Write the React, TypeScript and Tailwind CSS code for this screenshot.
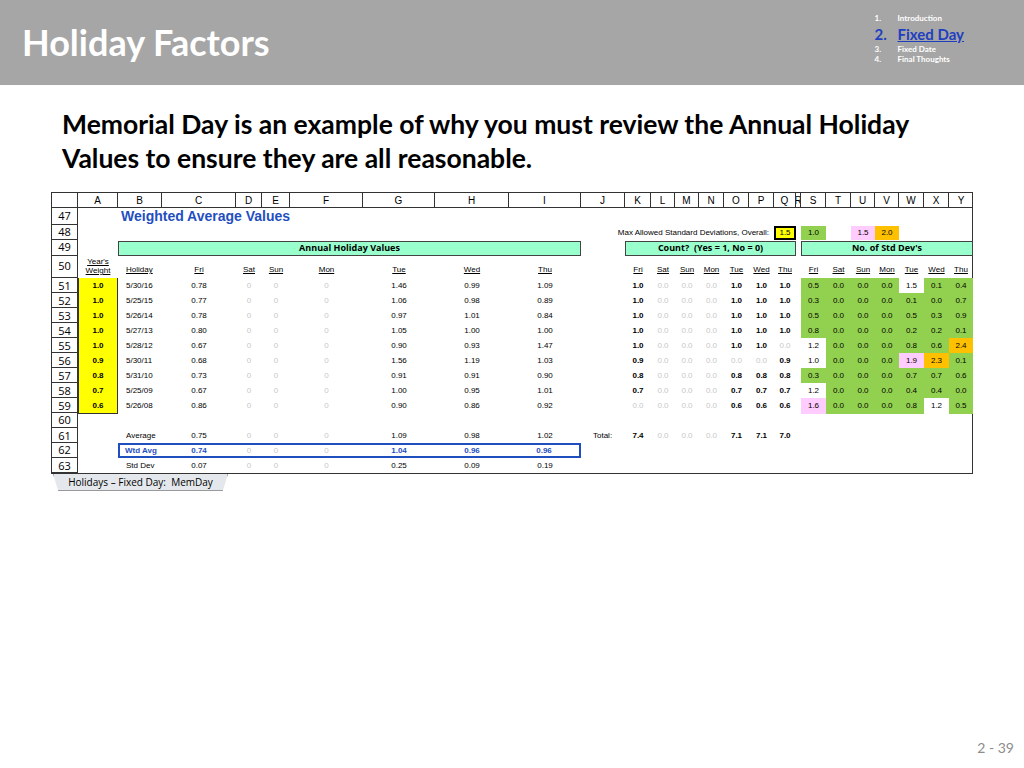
import React from "react";

const COLS = "grid-cols-[26px_40px_44px_74px_26px_28px_73px_72px_74px_72px_44px_26px_24px_24px_25px_25px_25px_22px_5px_25px_25px_24px_24px_25px_25px_24px]";
const LETTERS = ["A","B","C","D","E","F","G","H","I","J","K","L","M","N","O","P","Q","R","S","T","U","V","W","X","Y"];
const DAYS = ["Fri","Sat","Sun","Mon","Tue","Wed","Thu"];

type R = { n: number; w: string; d: string; v: string[]; c: string[]; s: string[] };
const rows: R[] = [
  { n: 51, w: "1.0", d: "5/30/16", v: ["0.78","1.46","0.99","1.09"], c: ["1.0","0.0","0.0","0.0","1.0","1.0","1.0"], s: ["0.5","0.0","0.0","0.0","1.5","0.1","0.4"] },
  { n: 52, w: "1.0", d: "5/25/15", v: ["0.77","1.06","0.98","0.89"], c: ["1.0","0.0","0.0","0.0","1.0","1.0","1.0"], s: ["0.3","0.0","0.0","0.0","0.1","0.0","0.7"] },
  { n: 53, w: "1.0", d: "5/26/14", v: ["0.78","0.97","1.01","0.84"], c: ["1.0","0.0","0.0","0.0","1.0","1.0","1.0"], s: ["0.5","0.0","0.0","0.0","0.5","0.3","0.9"] },
  { n: 54, w: "1.0", d: "5/27/13", v: ["0.80","1.05","1.00","1.00"], c: ["1.0","0.0","0.0","0.0","1.0","1.0","1.0"], s: ["0.8","0.0","0.0","0.0","0.2","0.2","0.1"] },
  { n: 55, w: "1.0", d: "5/28/12", v: ["0.67","0.90","0.93","1.47"], c: ["1.0","0.0","0.0","0.0","1.0","1.0","0.0"], s: ["1.2","0.0","0.0","0.0","0.8","0.6","2.4"] },
  { n: 56, w: "0.9", d: "5/30/11", v: ["0.68","1.56","1.19","1.03"], c: ["0.9","0.0","0.0","0.0","0.0","0.0","0.9"], s: ["1.0","0.0","0.0","0.0","1.9","2.3","0.1"] },
  { n: 57, w: "0.8", d: "5/31/10", v: ["0.73","0.91","0.91","0.90"], c: ["0.8","0.0","0.0","0.0","0.8","0.8","0.8"], s: ["0.3","0.0","0.0","0.0","0.7","0.7","0.6"] },
  { n: 58, w: "0.7", d: "5/25/09", v: ["0.67","1.00","0.95","1.01"], c: ["0.7","0.0","0.0","0.0","0.7","0.7","0.7"], s: ["1.2","0.0","0.0","0.0","0.4","0.4","0.0"] },
  { n: 59, w: "0.6", d: "5/26/08", v: ["0.86","0.90","0.86","0.92"], c: ["0.0","0.0","0.0","0.0","0.6","0.6","0.6"], s: ["1.6","0.0","0.0","0.0","0.8","1.2","0.5"] },
];

function sdBg(v: string) {
  const x = parseFloat(v);
  if (x >= 2) return "bg-[#ffc000]";
  if (x >= 1.6) return "bg-[#ffccff]";
  if (x >= 1) return "bg-white";
  return "bg-[#92d050]";
}

const Num = ({ n, h }: { n: number | string; h: string }) => (
  <div className={`${h} border-r border-b border-[#333] flex items-center justify-center text-[11px] font-normal text-black`} style={{ fontFamily: '"Open Sans", sans-serif' }}>{n}</div>
);

const Zeros = ({ cls = "" }: { cls?: string }) => (
  <>
    <div className={`text-center text-[#c8c8c8] ${cls}`}>0</div>
    <div className={`text-center text-[#c8c8c8] ${cls}`}>0</div>
    <div className={`text-center text-[#c8c8c8] ${cls}`}>0</div>
  </>
);

function DataRow({ r }: { r: R }) {
  return (
    <div className={`grid ${COLS} h-[15px] items-stretch text-[8px] leading-[15px]`}>
      <Num n={r.n} h="h-[15px]" />
      <div className="bg-[#ffff00] border border-[#333] border-t-0 text-center font-bold">{r.w}</div>
      <div className="pl-2">{r.d}</div>
      <div className="text-center">{r.v[0]}</div>
      <Zeros />
      <div className="text-center">{r.v[1]}</div>
      <div className="text-center">{r.v[2]}</div>
      <div className="text-center">{r.v[3]}</div>
      <div />
      {r.c.map((c, i) => (
        <div key={i} className={`text-center ${c === "0.0" ? "text-[#c8c8c8]" : "font-bold"}`}>{c}</div>
      ))}
      <div />
      {r.s.map((s, i) => (
        <div key={i} className={`text-center ${sdBg(s)}`}>{s}</div>
      ))}
    </div>
  );
}

export default function App() {
  const font = { fontFamily: '"Liberation Sans", Arial, sans-serif' };
  return (
    <div className="w-[1024px] h-[768px] bg-white relative overflow-hidden" style={{ fontFamily: '"Open Sans", sans-serif' }}>
      <div className="h-[85px] bg-[#a6a6a6] flex items-start justify-between">
        <div className="pl-[22px] pt-[19px] text-white font-bold text-[36px] leading-[46px]" style={{ fontFamily: 'Lato, sans-serif' }}>Holiday Factors</div>
        <div className="pt-[12px] pr-[60px] text-white" style={{ fontFamily: 'Lato, sans-serif' }}>
          <div className="flex text-[8px] leading-[12px] font-bold"><span className="w-[23px]">1.</span><span>Introduction</span></div>
          <div className="flex text-[15px] leading-[20px] font-bold text-[#1f3fbf]"><span className="w-[23px]">2.</span><span className="underline">Fixed Day</span></div>
          <div className="flex text-[8px] leading-[10px] font-bold"><span className="w-[23px]">3.</span><span>Fixed Date</span></div>
          <div className="flex text-[8px] leading-[10px] font-bold"><span className="w-[23px]">4.</span><span>Final Thoughts</span></div>
        </div>
      </div>

      <div className="pl-[62px] pt-[22px] text-[26.5px] leading-[34px] font-bold text-black" style={{ fontFamily: 'Lato, sans-serif' }}>
        Memorial Day is an example of why you must review the Annual Holiday<br />Values to ensure they are all reasonable.
      </div>

      <div className="ml-[51px] mt-[17px] w-[922px] border border-[#333] text-black" style={font}>
        <div className={`grid ${COLS} h-[15px] border-b border-[#333] text-[10px]`}>
          <div className="border-r border-[#333]" />
          {LETTERS.map((l) => (
            <div key={l} className="border-r border-[#333] last:border-r-0 flex items-center justify-center overflow-hidden">{l}</div>
          ))}
        </div>
        <div className={`grid ${COLS} h-[17px]`}>
          <Num n={47} h="h-[17px]" />
          <div />
          <div className="col-span-6 pl-[3px] text-[14px] font-bold text-[#1f4fbf] leading-[17px] whitespace-nowrap">Weighted Average Values</div>
        </div>
        <div className={`grid ${COLS} h-[15px] text-[8px] items-center`}>
          <Num n={48} h="h-[15px]" />
          <div className="col-span-16 text-right pr-[5px] whitespace-nowrap">Max Allowed Standard Deviations, Overall:</div>
          <div className="h-[14px] bg-[#ffff00] border-2 border-black text-center leading-[10px]">1.5</div>
          <div />
          <div className="h-[14px] bg-[#92d050] text-center leading-[14px]">1.0</div>
          <div />
          <div className="h-[14px] bg-[#ffccff] text-center leading-[14px]">1.5</div>
          <div className="h-[14px] bg-[#ffc000] text-center leading-[14px]">2.0</div>
        </div>
        <div className={`grid ${COLS} h-[16px] text-[9px] items-center`} style={{ fontFamily: '"Open Sans", sans-serif' }}>
          <Num n={49} h="h-[16px]" />
          <div />
          <div className="col-span-8 h-[15px] bg-[#99ffcc] border border-[#444] flex items-center justify-center font-bold">Annual Holiday Values</div>
          <div />
          <div className="col-span-7 h-[15px] bg-[#99ffcc] border border-[#444] flex items-center justify-center font-bold whitespace-pre">Count?  (Yes = 1, No = 0)</div>
          <div />
          <div className="col-span-7 h-[15px] bg-[#99ffcc] border border-[#444] flex items-center justify-center font-bold">No. of Std Dev's</div>
        </div>
        <div className={`grid ${COLS} h-[22px] text-[8px] items-end`}>
          <Num n={50} h="h-[22px]" />
          <div className="text-center leading-[9px] underline pb-[3px]">Year's<br />Weight</div>
          <div className="pl-2 underline pb-[2px]">Holiday</div>
          {DAYS.map((d) => <div key={d} className="text-center underline pb-[2px]">{d}</div>)}
          <div />
          {DAYS.map((d) => <div key={"k" + d} className="text-center underline pb-[2px]">{d}</div>)}
          <div />
          {DAYS.map((d) => <div key={"s" + d} className="text-center underline pb-[2px]">{d}</div>)}
        </div>
        {rows.map((r) => <DataRow key={r.n} r={r} />)}
        <div className={`grid ${COLS} h-[15px]`}><Num n={60} h="h-[15px]" /></div>
        <div className={`grid ${COLS} h-[15px] text-[8px] leading-[15px]`}>
          <Num n={61} h="h-[15px]" />
          <div />
          <div className="pl-2">Average</div>
          <div className="text-center">0.75</div>
          <Zeros />
          <div className="text-center">1.09</div>
          <div className="text-center">0.98</div>
          <div className="text-center">1.02</div>
          <div className="pl-[12px]">Total:</div>
          {["7.4","0.0","0.0","0.0","7.1","7.1","7.0"].map((c, i) => (
            <div key={i} className={`text-center ${c === "0.0" ? "text-[#c8c8c8]" : "font-bold"}`}>{c}</div>
          ))}
        </div>
        <div className={`grid ${COLS} h-[15px] text-[8px]`}>
          <Num n={62} h="h-[15px]" />
          <div />
          <div className="col-span-8 grid grid-cols-[42px_74px_26px_28px_73px_72px_74px_70px] border-2 border-[#1f4fbf] font-bold text-[#1f4fbf] leading-[11px]">
            <div className="pl-[5px]">Wtd Avg</div>
            <div className="text-center">0.74</div>
            <Zeros cls="font-normal" />
            <div className="text-center">1.04</div>
            <div className="text-center">0.96</div>
            <div className="text-center">0.96</div>
          </div>
        </div>
        <div className={`grid ${COLS} h-[15px] text-[8px] leading-[15px]`}>
          <Num n={63} h="h-[15px]" />
          <div />
          <div className="pl-2">Std Dev</div>
          <div className="text-center">0.07</div>
          <Zeros />
          <div className="text-center">0.25</div>
          <div className="text-center">0.09</div>
          <div className="text-center">0.19</div>
        </div>
      </div>
      <div className="ml-[53px] w-[175px] h-[17px] bg-[#e4e8ec] border border-t-0 border-[#999] text-[10px] flex items-center justify-center whitespace-pre [clip-path:polygon(0_0,100%_0,97%_100%,3%_100%)]" style={{ fontFamily: '"Open Sans", sans-serif' }}>
        Holidays – Fixed Day:  MemDay
      </div>

      <div className="absolute right-[10px] bottom-[10px] text-[14px] text-[#8c8c8c]" style={{ fontFamily: 'Lato, sans-serif' }}>2 - 39</div>
    </div>
  );
}
